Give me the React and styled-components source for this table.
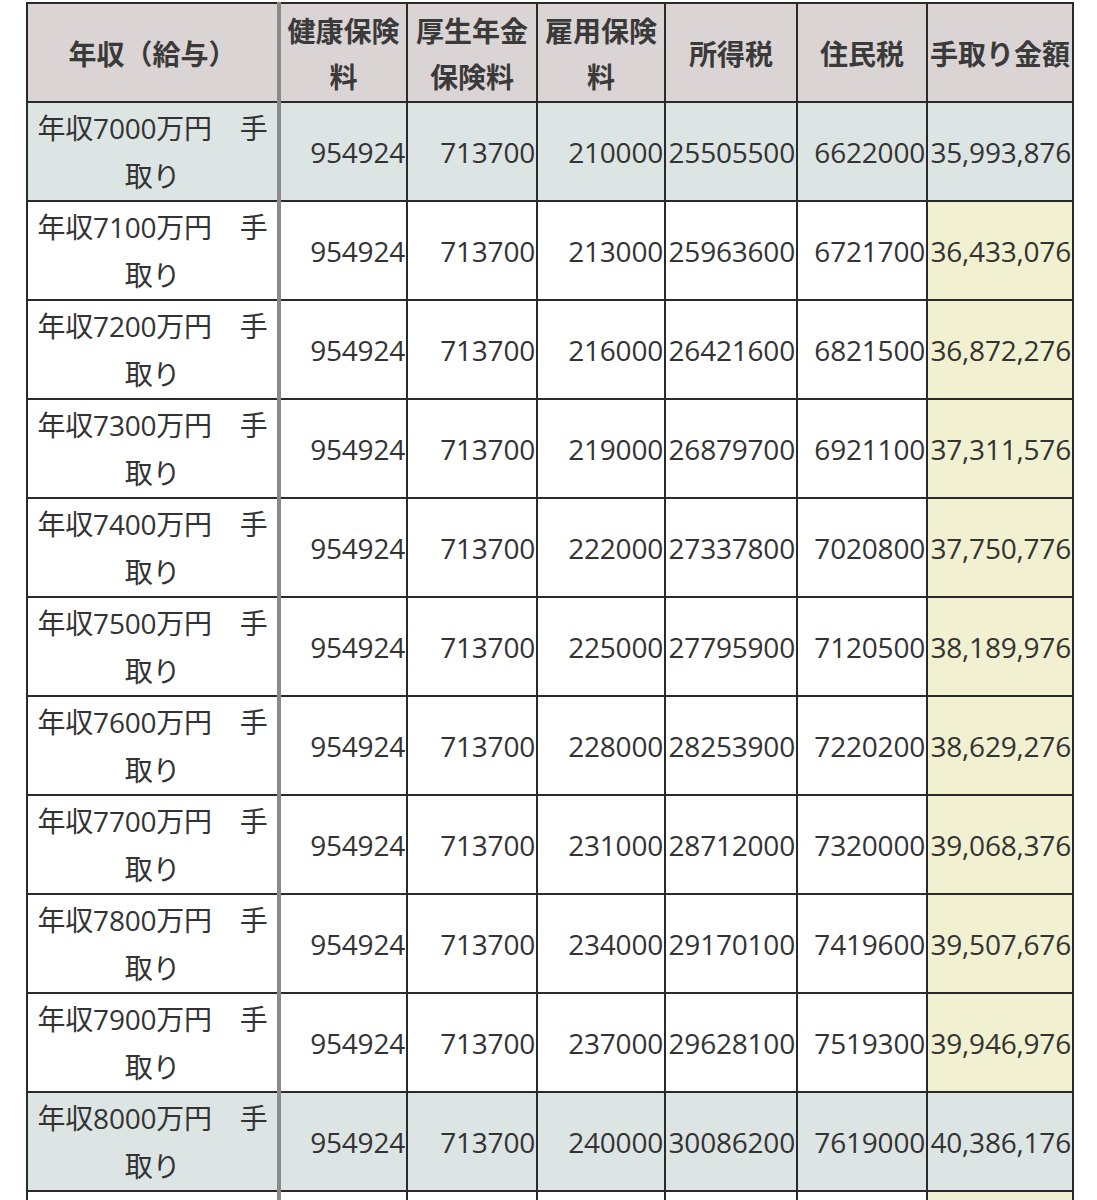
import styled, { createGlobalStyle } from "styled-components";

const GlobalStyle = createGlobalStyle`
  html, body {
    margin: 0;
    padding: 0;
    background: #fff;
    overflow: hidden;
  }
  body {
    font-family: "Open Sans", "Noto Sans CJK JP", sans-serif;
    color: #333;
  }
`;

const Wrapper = styled.div`
  padding: 2px 0 0 26px;
  height: 1200px;
  overflow: hidden;
`;

const Table = styled.table`
  border-collapse: collapse;
  table-layout: fixed;
  width: 1046px;
`;

const HeadCell = styled.th`
  background: #dad4d4;
  border: 2px solid #2a2a2a;
  border-right: ${(props) => (props.first ? "4px solid #8a8a8a" : "2px solid #2a2a2a")};
  height: 97px;
  padding: 0 2px;
  font-family: "Noto Sans CJK JP", sans-serif;
  font-weight: 700;
  font-size: 28px;
  line-height: 46px;
  color: #3a3a3a;
  text-align: center;
  vertical-align: middle;
`;

const Cell = styled.td`
  background: ${(props) =>
    props.hl ? "#dde4e4" : props.yellow ? "#f1f0d0" : "#fff"};
  border: 2px solid #2a2a2a;
  border-right: ${(props) => (props.first ? "4px solid #8a8a8a" : "2px solid #2a2a2a")};
  height: 97px;
  padding: ${(props) => (props.first ? "0 8px" : "0 1px 0 0")};
  font-size: 28px;
  line-height: 48px;
  color: #333;
  text-align: ${(props) => (props.first ? "center" : "right")};
  vertical-align: middle;
  white-space: ${(props) => (props.first ? "normal" : "nowrap")};
  letter-spacing: -0.2px;
`;

const widths = [252, 128, 130, 128, 132, 130, 146];

const headers = ["年収（給与）", "健康保険料", "厚生年金保険料", "雇用保険料", "所得税", "住民税", "手取り金額"];

const rows = [
  ["7000", "210000", "25505500", "6622000", "35,993,876"],
  ["7100", "213000", "25963600", "6721700", "36,433,076"],
  ["7200", "216000", "26421600", "6821500", "36,872,276"],
  ["7300", "219000", "26879700", "6921100", "37,311,576"],
  ["7400", "222000", "27337800", "7020800", "37,750,776"],
  ["7500", "225000", "27795900", "7120500", "38,189,976"],
  ["7600", "228000", "28253900", "7220200", "38,629,276"],
  ["7700", "231000", "28712000", "7320000", "39,068,376"],
  ["7800", "234000", "29170100", "7419600", "39,507,676"],
  ["7900", "237000", "29628100", "7519300", "39,946,976"],
  ["8000", "240000", "30086200", "7619000", "40,386,176"],
];

export default function App() {
  return (
    <>
      <GlobalStyle />
      <Wrapper>
        <Table>
          <colgroup>
            {widths.map((w, i) => (
              <col key={i} style={{ width: w }} />
            ))}
          </colgroup>
          <thead>
            <tr>
              {headers.map((h, i) => (
                <HeadCell key={h} first={i === 0}>
                  {h}
                </HeadCell>
              ))}
            </tr>
          </thead>
          <tbody>
            {rows.map(([income, koyo, shotoku, jumin, net]) => {
              const hl = income.endsWith("000");
              return (
                <tr key={income}>
                  <Cell first hl={hl}>{`年収${income}万円　手取り`}</Cell>
                  <Cell hl={hl}>954924</Cell>
                  <Cell hl={hl}>713700</Cell>
                  <Cell hl={hl}>{koyo}</Cell>
                  <Cell hl={hl}>{shotoku}</Cell>
                  <Cell hl={hl}>{jumin}</Cell>
                  <Cell hl={hl} yellow>{net}</Cell>
                </tr>
              );
            })}
            <tr>
              <Cell first />
              <Cell />
              <Cell />
              <Cell />
              <Cell />
              <Cell />
              <Cell yellow />
            </tr>
          </tbody>
        </Table>
      </Wrapper>
    </>
  );
}
